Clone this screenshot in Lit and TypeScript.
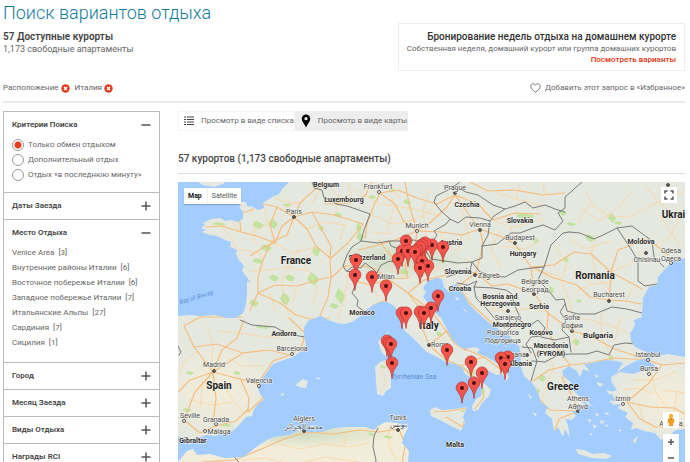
import { LitElement, html, svg, css } from "lit";
import { customElement, state } from "lit/decorators.js";

const MAINLAND =
  "M289 182L283 188 279 194 272 197 263 203 264 208 258 210 253 207 247 206 246 202 239 202 240 208 243 212 243 219 237 222 232 220 225 221 220 218 211 219 203 223 205 225 201 228 206 230 202 232 210 235 217 236 225 240 231 242 230 247 237 250 236 254 239 260 244 266 242 271 246 276 251 283 247 281 247 293 246 304 243 313 236 318 226 318 215 315 200 316 190 315 178 316V436L185 440 190 444 198 438 207 435 215 436 226 432 233 431 239 425 246 417 252 416 254 409 258 404 264 399 260 394 257 387 261 380 267 372 273 364 284 360 293 357 303 350 306 345 304 336 304 328 308 321 315 318 321 316 328 320 337 323 345 324 352 322 358 318 363 313 373 305 380 302 387 302 394 306 399 312 401 322 405 331 413 338 420 345 427 352 437 357 446 362 455 364 462 367 465 374 472 378 479 382 482 389 481 396 476 399 472 406 473 411 478 410 482 403 489 396 491 390 485 384 481 380 483 374 489 371 496 375 502 374 506 381 509 377 506 371 498 364 487 357 477 353 480 349 475 347 464 349 457 345 451 338 447 329 441 318 434 311 428 303 423 297 426 292 423 288 428 281 436 278 442 279 444 287 449 292 453 285 457 284 463 294 469 304 478 313 488 322 497 328 507 333 514 341 519 346 521 355 520 364 524 376 533 384 538 393 541 402 548 407 545 413 552 419 554 431 558 427 563 437 565 429 570 438 568 425 565 419 572 420 576 416 572 411 579 411 576 405 585 406 580 397 574 391 567 388 571 382 564 377 562 371 569 366 577 371 580 377 583 369 590 372 584 364 595 362 606 360 617 361 623 363 616 373 626 366 638 360 648 358 646 352 635 347 631 341 630 333 635 326 634 320 642 317 643 298 649 287 657 285 658 277 666 268 673 261 685 258V182Z";
const TURKEY =
  "M648 360L656 356 668 354 685 357V429L676 430 667 437 661 440 655 433 644 431 636 428 631 430 633 423 625 417 628 413 618 408 621 404 612 405 615 400 611 392 617 390 612 383 611 377 620 372 633 374 644 370 655 369 654 365Z";
const AFRICA =
  "M178 462L187 451 193 449 197 455 210 454 225 458 244 457 255 448 267 440 275 437 290 435 300 430 308 432 322 432 335 428 348 427 365 427 374 430 378 426 386 422 398 423 402 430 409 426 404 435 402 443 409 451 408 462 402 474 410 482H178Z";
const ISLANDS = [
  "M430 410L435 407 442 410 454 409 467 407 463 417 465 423 461 431 451 426 440 420 431 416Z",
  "M375 367L380 362 387 360 393 367 391 378 391 388 386 391 383 396 377 394 376 382Z",
  "M378 341L386 336 387 331 390 340 389 352 386 357 381 351Z",
  "M576 449L584 450 593 454 604 453 612 456 606 459 592 458 578 454Z",
  "M295 385L303 379 308 381 306 388 302 388Z",
  "M280 395L284 392 283 396Z", "M315 377L320 378 319 380Z",
  "M580 398L588 402 594 408 589 405Z", "M606 390L613 392 610 395Z", "M611 400L616 403 610 403Z",
  "M596 382L604 384 600 387Z", "M595 374L599 376 596 378Z", "M633 440L638 436 635 444Z",
  "M593 424L597 426 594 429Z", "M588 419L592 420 589 423Z", "M600 420L605 422 601 424Z",
  "M606 424L609 427 605 426Z", "M595 413L599 414 597 417Z", "M590 433L593 434 591 436Z",
  "M618 430L622 429 620 432Z", "M605 412L610 414 606 415Z", "M533 412L537 414 535 417Z",
  "M528 393L532 398 530 399Z", "M455 296L459 299 457 301Z", "M462 307L468 312 465 311Z",
];
const BORDERS =
  "M312 182L314 188 322 190 324 198 331 200 336 204 347 206 356 209 370 214 364 230 361 241 M361 241L352 247 347 255 343 266 346 271 353 272 355 286 352 293 358 300 357 306 365 312 M361 241L378 243 389 241 391 246 399 249 M389 241L401 241 414 240 424 243 433 241 437 235 434 231 446 224 450 219 441 211 434 202 436 196 450 189 460 182 M347 271L352 267 361 268 365 263 372 268 377 273 381 265 390 261 398 263 405 255 418 253 426 251 431 259 445 261 458 263 472 262 M450 219L458 223 466 217 480 218 490 221 494 216 505 209 493 205 478 195 466 192 460 189 M490 221L488 235 482 246 482 258 472 262 470 271 455 274 447 277 M482 246L497 244 511 233 520 233 533 228 543 225 555 230 563 221 558 213 565 208 565 197 573 190 582 182 M505 209L515 206 525 202 533 208 545 205 555 209 565 212 M472 262L480 272 493 276 505 277 518 270 532 268 544 267 551 245 563 233 569 232 M457 283L468 285 477 281 474 287 493 288 506 290 512 294 514 304 519 315 516 322 507 331 M474 287L476 298 486 308 495 319 505 328 M544 267L538 280 548 290 556 300 564 299 567 311 578 314 595 314 612 307 627 309 642 313 M519 320L529 326 538 320 545 328 541 336 531 337 526 344 531 353 M565 304L560 312 566 320 562 330 569 337 571 352 M541 337L555 340 569 337 M522 347L532 348 537 361 531 381 M532 361L545 362 558 355 571 354 587 354 597 351 609 355 614 345 625 343 635 344 M569 232L580 233 594 239 605 234 617 228 631 249 638 261 638 281 645 286 657 284 M617 228L632 226 644 235 652 241 654 257 664 267 M240 320L252 325 263 326 275 327 287 334 305 337 M385 482L374 472 376 460 373 447 374 436 378 428 M234 457L245 468 250 482 M178 346L181 352 179 355";
const MAIN_ROADS =
  "M294 217L277 207 263 204 M294 217L300 203 313 191 325 182 M294 217L312 212 335 215 363 224 M294 217L307 229 316 246 330 258 331 278 328 297 320 316 M294 217L282 226 275 243 264 247 250 256 M275 243L260 237 241 232 222 226 206 227 M241 232L239 214 254 209 M294 217L287 235 271 242 263 260 258 277 258 293 250 310 M258 293L275 285 297 286 329 277 M258 293L280 303 296 315 310 319 329 318 M331 278L343 267 356 264 M312 212L322 230 331 246 330 258 M363 224L348 243 331 258 M277 207L270 225 275 243 M289 318L305 333 302 346 290 355 273 361 257 384 263 398 248 412 M290 355L268 350 243 353 213 372 195 392 184 420 M213 372L194 347 184 326 200 317 242 317 M213 372L236 378 257 384 M213 372L216 399 213 422 M184 420L200 433 216 426 236 421 248 409 M213 372L190 380 178 392 M213 372L222 350 237 338 244 320 M194 347L217 344 243 353 M240 378L249 398 248 411 M380 193L374 205 367 224 365 238 M380 193L395 204 404 222 417 231 M380 193L398 190 417 198 437 204 455 195 M455 195L447 207 431 222 417 231 M417 231L440 232 462 235 480 229 M480 229L483 245 476 273 M480 229L470 216 455 195 M480 229L502 237 515 244 531 267 534 293 548 313 572 331 M417 231L395 240 375 246 358 250 M455 195L478 204 493 220 515 213 540 214 M417 231L415 249 405 265 408 278 388 279 M388 279L375 269 359 265 M388 279L370 285 356 281 M388 279L386 300 373 305 M388 279L408 293 424 280 443 276 458 270 476 273 M408 293L418 306 421 325 429 345 446 360 461 366 478 381 484 397 475 409 M429 345L447 331 463 348 484 357 503 371 M408 293L431 311 444 328 454 343 465 350 M461 366L475 360 484 357 M467 408L449 411 434 412 M467 408L463 427 446 417 M476 273L492 286 508 284 533 293 M476 273L458 286 470 303 492 323 M573 331L592 337 615 349 648 360 M548 313L547 330 556 347 570 365 M570 365L588 363 615 358 648 360 M570 365L562 378 571 394 579 411 M533 381L549 370 570 365 M540 400L550 410 578 411 M578 411L559 419 554 433 M609 300L590 297 577 285 551 277 533 267 M609 300L626 301 641 304 M609 300L611 272 618 250 648 239 668 255 M611 272L631 283 642 289 M531 267L554 265 574 252 591 254 611 272 M470 182L488 191 515 190 543 195 565 193 M648 360L662 365 685 363 M662 365L649 383 627 402 639 418 655 427 685 426 M627 402L650 407 674 408 685 414 M308 432L334 434 359 430 379 432 399 429 405 444 402 465 M308 432L284 439 257 451 235 460 202 462 M379 240L386 250 398 263 M372 182L365 196 348 203 325 204 M405 182L409 204 417 231";
const MINOR_ROADS =
  "M219 223L231 238 238 252 M254 222L254 243 M301 246L290 262 282 282 288 313 M275 243L292 253 317 247 M251 271L269 270 286 267 309 271 M270 293L275 310 M307 229L325 222 345 225 M296 203L286 207 M335 215L340 198 330 188 M345 260L348 278 344 299 338 319 M207 327L213 345 211 370 M219 331L240 333 263 337 282 337 M199 350L185 361 179 373 M227 358L242 366 263 366 M226 390L237 405 245 415 M190 400L211 405 233 402 M203 379L200 408 M355 190L381 204 414 209 440 216 M389 182L394 207 387 230 M370 214L392 224 416 221 M429 190L423 211 426 236 M459 203L466 224 469 240 M497 193L516 199 543 206 M493 220L511 228 543 219 M500 231L491 248 500 267 M500 246L525 249 540 241 M531 270L558 275 566 292 574 319 M555 247L567 263 561 281 M569 239L586 249 610 241 M591 250L595 271 609 290 M611 272L630 264 645 250 M574 292L591 284 613 282 M626 301L633 287 M566 315L590 320 618 328 631 335 M574 331L575 350 M601 314L602 337 611 356 M620 318L615 341 M545 350L554 366 547 385 542 400 M549 388L568 386 M586 192L593 206 610 216 629 217 652 205 685 191 M581 209L599 221 619 207 631 192 M645 185L660 203 679 218 670 238 653 246 M660 216L680 246 M480 298L493 310 510 311 M497 296L492 312 M514 311L528 308 547 312 M465 258L479 269 M405 265L421 270 441 268 M372 283L377 296 M390 269L409 278 M421 315L432 322 M446 337L435 348 M472 371L483 369 M382 340L386 351 M380 368L386 382 381 392 M634 380L655 380 676 372 M650 369L656 393 667 407 M639 405L644 423 M623 390L637 388 651 393 M677 390L672 426 M662 390L685 393 M281 445L301 449 325 444 349 447 369 443 M242 460L266 458 292 465 326 457 359 462 M349 431L344 445 M389 427L389 445 396 460 M264 208L268 224 252 232 M232 222L240 232 M275 198L285 202 303 203 M309 271L317 288 313 304 M297 286L293 302 M317 247L302 262 309 271 M239 249L258 252 263 260 M320 190L312 204 M345 225L340 240 M348 182L352 198 M392 190L400 197 M404 222L424 216 437 204 M372 232L392 234 M440 232L446 245 M462 235L458 252 M511 228L515 243 M520 182L516 199 M543 182L545 195 M590 205L578 222 M596 240L591 254 M580 270L591 284";
const PARKS = [
  [219, 224, 7, 2], [258, 225, 6, 4], [273, 224, 5, 5], [266, 248, 6, 4], [258, 261, 6, 3], [287, 205, 5, 2],
  [316, 251, 4, 6], [274, 278, 5, 4], [290, 278, 5, 4], [313, 279, 6, 7], [285, 299, 5, 7], [254, 303, 5, 4],
  [338, 215, 4, 3], [340, 296, 5, 8], [334, 306, 5, 3], [321, 228, 3, 3], [216, 184, 5, 3], [237, 373, 4, 2],
  [187, 410, 5, 2], [226, 425, 6, 2], [190, 373, 4, 2], [263, 327, 8, 2], [360, 237, 4, 5], [407, 202, 4, 3],
  [359, 228, 3, 6], [372, 197, 4, 2], [392, 190, 3, 2], [423, 272, 3, 4], [404, 272, 5, 3], [443, 261, 5, 2],
  [525, 216, 10, 3], [563, 213, 4, 3], [590, 238, 5, 4], [612, 218, 4, 5], [618, 223, 4, 2], [571, 224, 5, 2],
  [566, 260, 3, 3], [551, 290, 3, 4], [579, 301, 3, 2], [576, 342, 4, 4], [611, 358, 3, 3], [542, 378, 4, 4],
  [538, 391, 2, 4], [464, 346, 3, 3], [439, 334, 3, 3], [471, 373, 4, 3], [383, 367, 3, 2], [384, 341, 2, 5],
  [483, 391, 2, 4], [631, 343, 3, 1], [371, 434, 3, 2], [388, 437, 5, 2], [463, 411, 4, 1], [535, 240, 3, 3],
];

type Label = [number, number, string, string];
const LABELS: Label[] = [
  [326, 187, "Belgium", "b"], [344, 202, "Luxembourg", "b"], [378, 189, "Frankfurt", ""], [294, 214, "Paris", ""],
  [296, 264, "France", "c"], [455, 190, "Prague", ""], [467, 207, "Czechia", "b"], [417, 228, "Munich", ""],
  [480, 227, "Vienna", ""], [520, 223, "Slovakia", "b"], [451, 245, "Austria", "b"], [367, 260, "Switzerland", "b"],
  [523, 256, "Hungary", "b"], [520, 240, "Budapest", ""], [458, 274, "Slovenia", "b"], [386, 279, "Milan", ""],
  [489, 278, "Zagreb", ""], [460, 291, "Croatia", "b"], [500, 299, "Bosnia and", "b"], [500, 306, "Herzegovina", "b"],
  [508, 320, "Sarajevo", ""], [535, 284, "Belgrade", ""], [535, 292, "Београд", ""], [539, 309, "Serbia", "b"],
  [362, 315, "Monaco", "b"], [284, 336, "Andorra", "b"], [292, 351, "Barcelona", ""], [214, 367, "Madrid", ""],
  [219, 389, "Spain", "c"], [259, 383, "Valencia", ""], [190, 418, "Seville", ""], [216, 422, "Granada", ""],
  [219, 434, "Málaga", ""], [193, 443, "Gibraltar", "b"], [304, 421, "Algiers", ""], [304, 429, "مدينة الجزائر", ""],
  [398, 420, "Tunis", ""], [398, 427, "تونس", ""], [455, 447, "Malta", "b"], [440, 347, "Rome", ""],
  [429, 329, "Italy", "c"], [512, 327, "Montenegro", "b"], [503, 335, "Podgorica", ""], [503, 343, "Подгорица", ""],
  [541, 335, "Kosovo", "b"], [551, 348, "Macedonia", "b"], [551, 356, "(FYROM)", "b"], [516, 357, "Tirana", ""],
  [520, 366, "Albania", "b"], [572, 320, "Sofia", ""], [572, 328, "София", ""], [598, 338, "Bulgaria", "b m"],
  [595, 279, "Romania", "c"], [609, 297, "Bucharest", ""], [641, 244, "Moldova", "b"], [647, 262, "Chisinau", ""],
  [671, 253, "Odesa", ""], [671, 261, "Одеса", ""], [679, 218, "Ukraine", "c"], [648, 357, "Istanbul", ""],
  [649, 371, "Bursa", ""], [563, 390, "Greece", "c"], [578, 401, "Athens", ""], [578, 409, "Αθήνα", ""],
  [623, 401, "Izmir", ""], [671, 426, "Antalya", ""], [414, 379, "Tyrrhenian Sea", "w"],
];
const CITIES = [
  [379, 192, 0], [294, 217, 1], [455, 193, 1], [417, 231, 0], [480, 230, 1], [515, 243, 1], [475, 275, 1],
  [534, 294, 1], [508, 311, 1], [292, 354, 0], [214, 371, 1], [259, 386, 0], [184, 421, 0], [216, 424, 0],
  [205, 431, 0], [304, 431, 1], [398, 430, 1], [429, 345, 1], [572, 331, 1], [609, 301, 1], [646, 253, 1],
  [671, 263, 0], [648, 360, 0], [649, 374, 0], [578, 411, 1], [623, 404, 0], [668, 185, 1], [527, 355, 1],
];
const PINS = [
  [406, 241], [432, 245], [425, 243], [422, 245], [443, 247], [420, 247], [417, 250], [402, 251], [408, 251],
  [415, 252], [398, 259], [422, 261], [356, 260], [428, 266], [420, 268], [355, 275], [372, 277], [386, 286],
  [438, 296], [431, 308], [402, 313], [406, 313], [420, 312], [424, 313], [387, 341], [389, 343], [391, 344],
  [447, 350], [392, 363], [471, 362], [508, 357], [501, 358], [505, 364], [482, 373], [474, 383], [462, 388],
];

@customElement("resort-map")
class ResortMap extends LitElement {
  static styles = css`
    :host { display: block; position: relative; font-family: Roboto, sans-serif; }
    .map { display: block; width: 100%; height: auto; background: #a3ccff; }
    .land { fill: #e5e8df; }
    .dry { fill: #f2edda; }
    .park { fill: #c1e3a0; }
    .road, .lane, .border { fill: none; stroke-linejoin: round; stroke-linecap: round; }
    .road { stroke: #f7bd7c; stroke-width: 1.2px; }
    .lane { stroke: #fad5a2; stroke-width: 0.8px; }
    .border { stroke: #7b7b7b; stroke-width: 1px; }
    .label { font-size: 7px; fill: #4a4a4a; text-anchor: middle; paint-order: stroke; stroke: #f5f5f0; stroke-width: 1px; }
    .b { font-weight: 700; fill: #2d2d2d; }
    .m { font-size: 8px; }
    .c { font-size: 10px; font-weight: 700; fill: #222; }
    .w { font-style: italic; fill: #5b8ed0; stroke: none; }
    .bay { font-size: 6px; }
    .dot { fill: #555; stroke: #555; }
    .ring { fill: #fff; stroke: #555; }
    .pin { fill: #f5544c; stroke: #b4332c; stroke-width: 0.7px; }
    .eye { fill: #48100d; }
    .kinds, .full, .corner { position: absolute; }
    .kinds { left: 6px; top: 6px; display: flex; background: #fff; box-shadow: 0 1px 1px #0003; }
    .full { right: 8px; top: 5px; }
    .corner { right: 6px; bottom: 16px; display: grid; gap: 6px; }
    .zoom { display: grid; background: #fff; box-shadow: 0 1px 1px #0003; }
    button { font: inherit; border: 0; padding: 0; background: #fff; color: #555; cursor: pointer; }
    .kind { font-size: 7px; line-height: 16px; padding: 0 4px; }
    .kind[aria-pressed="true"] { font-weight: 700; color: #111; border-right: 1px solid #eee; padding-right: 5px; }
    .tool { display: grid; place-items: center; width: 16px; height: 16px; }
  `;

  render() {
    return html`
      <svg class="map" viewBox="178 182 507 300" role="img" aria-label="Карта курортов">
        <defs>
          <clipPath id="ground"><path d=${MAINLAND} /><path d=${TURKEY} /><path d=${AFRICA} />${ISLANDS.map((d) => svg`<path d=${d} />`)}</clipPath>
          <radialGradient id="warm"><stop offset="0" stop-color="#f4edd8" /><stop offset="1" stop-color="#f4edd8" stop-opacity="0" /></radialGradient>
          <radialGradient id="alps"><stop offset="0" stop-color="#cfdcc2" /><stop offset="1" stop-color="#cfdcc2" stop-opacity="0" /></radialGradient>
        </defs>
        <path class="land" d="M198 182L203 185 214 187 223 184 225 182Z" />
        <path class="land" d=${MAINLAND} />
        <path class="land" d=${TURKEY} />
        <path class="dry" d=${AFRICA} />
        ${ISLANDS.map((d) => svg`<path class="land" d=${d} />`)}
        <g clip-path="url(#ground)">
          <ellipse cx="220" cy="390" rx="60" ry="50" fill="url(#warm)" />
          <ellipse cx="665" cy="400" rx="50" ry="42" fill="url(#warm)" />
          <ellipse cx="400" cy="258" rx="70" ry="22" fill="url(#alps)" />
          <ellipse cx="300" cy="434" rx="100" ry="14" fill="url(#alps)" />
          ${PARKS.map(([x, y, w, h]) => svg`<path class="park" d="M${x - w} ${y}L${x - w / 3} ${y - h} ${x + w / 2} ${y - h / 2} ${x + w} ${y} ${x + w / 3} ${y + h} ${x - w / 2} ${y + h / 2}Z" />`)}
          <path class="lane" d=${MINOR_ROADS} />
          <path class="road" d=${MAIN_ROADS} />
          <path class="border" d=${BORDERS} />
        </g>
        ${CITIES.map(([x, y, big]) => svg`<circle class=${big ? "dot" : "ring"} cx=${x} cy=${y} r="1.5" />`)}
        ${LABELS.map(([x, y, text, kind]) => svg`<text class="label ${kind}" x=${x} y=${y}>${text}</text>`)}
        <text class="label w bay" x="197" y="299" transform="rotate(-17 197 299)">Bay of Biscay</text>
        ${PINS.map(([x, y]) => svg`<g transform="translate(${x} ${y})">
          <path class="pin" d="M0 15.500C-.5 10-1.600 7.500-3.500 4.800-5 2.800-5.800 1.500-5.800-.3A5.800 5.800 0 0 1 5.800-.3C5.800 1.500 5 2.800 3.500 4.800 1.600 7.500.5 10 0 15.500Z" />
          <circle class="eye" r="2" /></g>`)}
      </svg>
      <div class="kinds">
        <button class="kind" aria-pressed="true">Map</button>
        <button class="kind" aria-pressed="false">Satellite</button>
      </div>
      <button class="tool full" aria-label="Во весь экран">
        <svg width="10" height="10" viewBox="0 0 10 10" fill="none" stroke="#555" stroke-width="1.5"><path d="M1 3.500V1h2.500M6.500 1H9v2.500M9 6.500V9H6.500M3.500 9H1V6.500" /></svg>
      </button>
      <div class="corner">
        <button class="tool" aria-label="Просмотр улиц">
          <svg width="12" height="14" viewBox="0 0 12 14"><ellipse cx="6" cy="12.500" rx="3.500" ry="1" fill="#ddd" /><circle cx="6" cy="3" r="2.200" fill="#f5b32f" /><path d="M3 5.500h6l.5 4-1.300.4-.4 3H4.200l-.4-3-1.300-.4z" fill="#f0a01e" /><path d="M4.500 5.500h3L6 7z" fill="#b97010" /></svg>
        </button>
        <div class="zoom">
          <button class="tool" aria-label="Приблизить"><svg width="8" height="8" viewBox="0 0 8 8" stroke="#555" stroke-width="1.500"><path d="M4 1v6M1 4h6" /></svg></button>
          <button class="tool" aria-label="Отдалить"><svg width="8" height="8" viewBox="0 0 8 8" stroke="#555" stroke-width="1.500"><path d="M1 4h6" /></svg></button>
        </div>
      </div>
    `;
  }
}

const AREAS: [string, number][] = [
  ["Venice Area", 3], ["Внутренние районы Италии", 6], ["Восточное побережье Италии", 6],
  ["Западное побережье Италии", 7], ["Итальянские Альпы", 27], ["Сардиния", 7], ["Сицилия", 1],
];
const MODES = ["Только обмен отдыхом", "Дополнительный отдых", "Отдых «в последнюю минуту»"];
const SECTIONS = ["Критерии Поиска", "Даты Заезда", "Место Отдыха", "Город", "Месяц Заезда", "Виды Отдыха", "Награды RCI"];

@customElement("app-root")
class AppRoot extends LitElement {
  @state() private open = new Set([0, 2]);

  static styles = css`
    :host { display: block; box-sizing: border-box; height: 100vh; overflow: hidden; padding: 1px 5px 0 3px; background: #fff;
      color: #666; font-family: Roboto, "Liberation Sans", sans-serif; font-size: 8px; line-height: 12px; }
    h1, h2, h3, p, ul { margin: 0; padding: 0; font: inherit; }
    button { font: inherit; color: inherit; border: 0; padding: 0; background: none; cursor: pointer; }
    a { color: inherit; text-decoration: none; }
    .top { display: flex; justify-content: space-between; align-items: flex-end; }
    .top h1 { font-size: 18px; line-height: 24px; font-weight: 300; color: #137c9c; }
    .stats { padding-bottom: 16px; }
    .stats h2 { margin-top: 6px; font-size: 10px; line-height: 12px; font-weight: 600; color: #444; }
    .stats p { font-size: 9px; }
    .promo { border: 1px solid #eee; padding: 6px 8px 5px; text-align: right; line-height: 11px; }
    .promo h2 { font-size: 10px; font-weight: 500; line-height: 13px; color: #333; }
    .promo a { font-weight: 600; color: #e0411c; }
    .bar { display: flex; justify-content: space-between; align-items: center; height: 32px; padding-top: 4px; border-bottom: 2px solid #ececec; box-sizing: border-box; }
    .chips { display: flex; gap: 5px; }
    .chip, .fav { display: flex; align-items: center; gap: 2px; }
    .fav { gap: 4px; }
    .chip button, .chip svg, .fav svg { display: block; }
    .cols { display: grid; grid-template-columns: 157px minmax(0, 1fr); gap: 18px; padding-top: 8px; align-items: start; }
    .side { border: 1px solid #bbb; box-sizing: border-box; }
    .side section + section { border-top: 1px solid #bbb; }
    .head { display: flex; width: 100%; justify-content: space-between; align-items: center; height: 26px; padding: 0 8px; font-weight: 600; color: #444; }
    .modes { display: grid; gap: 3px; padding: 1px 8px 11px; }
    .mode { display: flex; align-items: center; gap: 4px; }
    .mode input { appearance: none; box-sizing: border-box; width: 12px; height: 12px; margin: 0; border: 1px solid #999; border-radius: 50%; background: #fff; }
    .mode input:checked { background: radial-gradient(circle, #e0411c 0 3px, #fff 4px); }
    .areas { list-style: none; display: grid; gap: 3px; padding: 1px 8px 13px; }
    .count { padding-left: 4px; }
    .views { display: flex; }
    .view { display: flex; align-items: center; height: 20px; gap: 7px; padding-left: 5px; border: 1px solid #f4f4f4; box-sizing: border-box; white-space: nowrap; }
    .view.on { background: #ededed; border-color: #ededed; }
    .found { margin: 21px 0 8px; padding-bottom: 7px; border-bottom: 1px solid #ddd; font-size: 10px; line-height: 14px; font-weight: 500; color: #444; }
  `;

  private flip(i: number) {
    const next = new Set(this.open);
    if (!next.delete(i)) next.add(i);
    this.open = next;
  }

  private chip(text: string) {
    return html`<span class="chip">${text}
      <button aria-label="Убрать: ${text}"><svg width="9" height="9" viewBox="0 0 9 9"><circle cx="4.500" cy="4.500" r="4.200" fill="#df3d1b" /><path d="M3 3l3 3M6 3L3 6" stroke="#fff" stroke-width="1.400" /></svg></button></span>`;
  }

  private body(i: number) {
    if (i === 0)
      return html`<div class="modes">${MODES.map((m, n) => html`<label class="mode"><input type="radio" name="mode" .checked=${n === 0} />${m}</label>`)}</div>`;
    if (i === 2)
      return html`<ul class="areas">${AREAS.map(([name, n]) => html`<li><a href="#">${name}<span class="count">[${n}]</span></a></li>`)}</ul>`;
    return null;
  }

  render() {
    return html`
      <header class="top">
        <div class="stats">
          <h1>Поиск вариантов отдыха</h1>
          <h2>57 Доступные курорты</h2>
          <p>1,173 свободные апартаменты</p>
        </div>
        <aside class="promo">
          <h2>Бронирование недель отдыха на домашнем курорте</h2>
          <p>Собственная неделя, домашний курорт или группа домашних курортов</p>
          <a href="#">Посмотреть варианты</a>
        </aside>
      </header>
      <div class="bar">
        <div class="chips">${this.chip("Расположение")}${this.chip("Италия")}</div>
        <button class="fav"><svg width="11" height="10" viewBox="0 0 11 10" fill="none" stroke="#666" stroke-width="0.900"><path d="M5.500 9.200C3 7.200.8 5.400.8 3.300.8 1.800 1.900.8 3.200.8 4.200.8 5.100 1.400 5.500 2.300 5.900 1.400 6.800.8 7.800.8 9.100.8 10.200 1.800 10.200 3.300 10.200 5.400 8 7.200 5.500 9.200Z" /></svg>Добавить этот запрос в «Избранное»</button>
      </div>
      <div class="cols">
        <nav class="side">
          ${SECTIONS.map((name, i) => html`<section>
            <button class="head" aria-expanded=${this.open.has(i)} @click=${() => this.flip(i)}>${name}
              <svg width="10" height="10" viewBox="0 0 10 10" stroke="#555" stroke-width="1.500"><path d=${this.open.has(i) ? "M.5 5h9" : "M.5 5h9M5 .5v9"} /></svg>
            </button>
            ${this.open.has(i) ? this.body(i) : null}
          </section>`)}
        </nav>
        <main>
          <div class="views">
            <button class="view"><svg width="10" height="10" viewBox="0 0 10 10" stroke="#444" stroke-width="1"><path d="M0 1h2M3 1h7M0 3.500h2M3 3.500h7M0 6h2M3 6h7M0 8.500h2M3 8.500h7" /></svg>Просмотр в виде списка</button>
            <button class="view on"><svg width="10" height="14" viewBox="0 0 10 14"><path fill-rule="evenodd" d="M5 13.500C4 10.500.7 7.500.7 4.700A4.300 4.300 0 0 1 9.300 4.700C9.300 7.500 6 10.500 5 13.500ZM5 6.300A1.600 1.600 0 1 0 5 3.100 1.600 1.600 0 0 0 5 6.300Z" fill="#000" /></svg>Просмотр в виде карты</button>
          </div>
          <h2 class="found">57 курортов (1,173 свободные апартаменты)</h2>
          <resort-map></resort-map>
        </main>
      </div>
    `;
  }
}
